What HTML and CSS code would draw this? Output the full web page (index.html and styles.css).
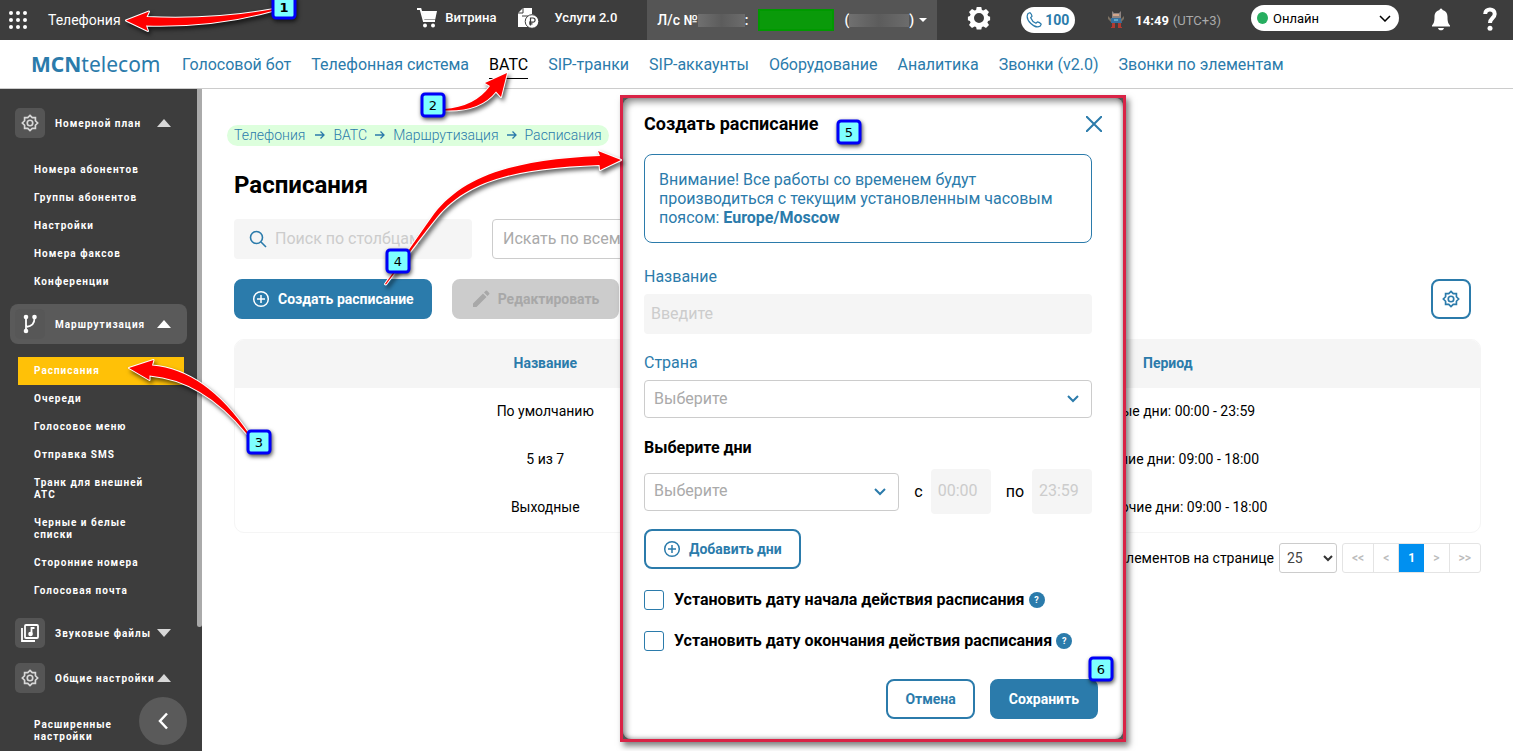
FILE: index.html
```html
<!DOCTYPE html>
<html lang="ru">
<head>
    <meta charset="UTF-8">
    <meta name="viewport" content="width=device-width, initial-scale=1.0">
    <title>MCNtelecom - Расписания</title>
    <link rel="stylesheet" href="styles.css">
</head>
<body>
    <!-- shared icons -->
    <svg class="sprite" aria-hidden="true">
        <symbol id="i-gear" viewBox="0 0 24 24">
            <path d="M12 2.8l2.7 2.7h3.8v3.8l2.7 2.7-2.7 2.7v3.8h-3.8L12 21.2l-2.7-2.7H5.500v-3.800L2.800 12l2.700-2.700V5.500h3.800z" fill="none" stroke="currentColor" stroke-width="2"/>
            <circle cx="12" cy="12" r="3.300" fill="none" stroke="currentColor" stroke-width="2"/>
        </symbol>
        <symbol id="i-plus" viewBox="0 0 18 18">
            <circle cx="9" cy="9" r="7.300" fill="none" stroke="currentColor" stroke-width="1.500"/>
            <path d="M9 5v8M5 9h8" stroke="currentColor" stroke-width="1.500"/>
        </symbol>
        <symbol id="i-arrow" viewBox="0 0 10 10">
            <path d="M0 5h9M5.500 1.500L9 5 5.500 8.500" fill="none" stroke="currentColor" stroke-width="1.300"/>
        </symbol>
    </svg>

    <header class="topbar">
        <button class="icon-btn apps" aria-label="Приложения">
            <svg width="18" height="18" viewBox="0 0 18 18" fill="#fff">
                <circle cx="2" cy="2" r="2"/><circle cx="9" cy="2" r="2"/><circle cx="16" cy="2" r="2"/>
                <circle cx="2" cy="9" r="2"/><circle cx="9" cy="9" r="2"/><circle cx="16" cy="9" r="2"/>
                <circle cx="2" cy="16" r="2"/><circle cx="9" cy="16" r="2"/><circle cx="16" cy="16" r="2"/>
            </svg>
        </button>
        <a href="#" class="section-name">Телефония</a>
        <div class="topbar-right">
            <a href="#" class="top-link">
                <svg width="22" height="22" viewBox="0 0 22 22" fill="#fff">
                    <path d="M1 2h3.500l3.300 12H19" fill="none" stroke="#fff" stroke-width="1.800"/>
                    <path d="M5.500 4H21l-1.800 8.500H7.800z"/>
                    <circle cx="9" cy="18.500" r="2"/><circle cx="17" cy="18.500" r="2"/>
                </svg>
                <span>Витрина</span>
            </a>
            <a href="#" class="top-link services">
                <svg width="22" height="22" viewBox="0 0 22 22" fill="#fff">
                    <path d="M6 1h9v6l2 1v12H1V6z"/>
                    <path d="M1 6h5V1M5 9h6" fill="none" stroke="#3d3d3d"/>
                    <circle cx="15" cy="14.500" r="6.800" stroke="#3d3d3d"/>
                    <path d="M13.500 18.500v-7.500h2.500a2 2 0 0 1 0 4.200h-4M12 16.800h3.500" fill="none" stroke="#3d3d3d" stroke-width="1.200"/>
                </svg>
                <span>Услуги 2.0</span>
            </a>
            <button class="account">
                <span>Л/с №</span><span class="masked number"></span><span>:</span>
                <span class="masked balance"></span>
                <span>(</span><span class="masked credit"></span><span>)</span>
                <span class="caret"></span>
            </button>
            <button class="icon-btn settings" aria-label="Настройки">
                <svg width="24" height="24" viewBox="0 0 24 24" fill="#fff" fill-rule="evenodd">
                    <path d="M9.700 1h4.600l.6 2.900 1.500.7 2.600-1.600 3 3-1.600 2.600.7 1.500 2 .6v3.600l-2 .6-.7 1.500L22 19l-3 3-2.600-1.600-1.500.7-.6 2.400H9.700l-.6-2.400-1.500-.7L5 22l-3-3 1.600-2.600-.7-1.500-2-.6v-3.600l2-.6.7-1.500L2 6l3-3 2.600 1.600 1.500-.7zM12 7a5 5 0 1 0 0 10 5 5 0 0 0 0-10z"/>
                </svg>
            </button>
            <a href="#" class="phone-pill">
                <svg width="16" height="16" viewBox="0 0 16 16" fill="none" stroke="#2b7bab" stroke-width="1.200">
                    <path d="M2 1.500l2-.8c1 .8 1.800 2.200 2 3.500L4.700 5.700c.8 2.200 2.900 4.500 5.200 5.500l1.600-1.400c1.500.3 2.800 1.200 3.700 2.300l-.9 2C9 17.500-1.500 8 2 1.500z"/>
                </svg>
                <span>100</span>
            </a>
            <span class="clock">
                <svg width="18" height="20" viewBox="0 0 18 20">
                    <path d="M5 1l2 2h5l2-2v7H5z" fill="#8d8380"/>
                    <path d="M6 4h6v2H6z" fill="#d2a58a"/>
                    <path d="M4 8h10l1 5H4z" fill="#356f9d"/>
                    <path d="M1 6l3 3v3L1 9zM17 6l-3 3v3l3-3z" fill="#7b7062"/>
                    <path d="M7 9h4v2H7z" fill="#5fa7c8"/>
                    <path d="M5 13h3v5H4v-1h1zM11 13h3v4h1v1h-4z" fill="#b03a30"/>
                </svg>
                <b>14:49</b> <span>(UTC+3)</span>
            </span>
            <div class="status">
                <span class="dot"></span>
                <select aria-label="Статус">
                    <option>Онлайн</option>
                </select>
            </div>
            <button class="icon-btn bell" aria-label="Уведомления">
                <svg width="20" height="24" viewBox="0 0 20 24" fill="#fff">
                    <path d="M8.500 2a1.500 1.500 0 0 1 3 0c3.500.8 5 3.500 5 7 0 5 .8 6.500 2.500 8.500v1H1v-1C2.700 15.500 3.500 14 3.500 9c0-3.500 1.500-6.200 5-7zM7 20h6c-.3 1.500-1.500 2.300-3 2.300S7.300 21.500 7 20z"/>
                </svg>
            </button>
            <button class="icon-btn help" aria-label="Помощь">
                <svg width="14" height="26" viewBox="0 0 14 26">
                    <path d="M2.200 7C2 1 12 1 11.700 7c0 4-4.700 4-4.700 9" fill="none" stroke="#fff" stroke-width="4"/>
                    <circle cx="7" cy="21.200" r="2.500" fill="#fff"/>
                </svg>
            </button>
        </div>
    </header>

    <nav class="mainnav">
        <a href="#" class="logo"><b>MCN</b>telecom</a>
        <a href="#">Голосовой бот</a>
        <a href="#">Телефонная система</a>
        <a href="#" class="active">ВАТС</a>
        <a href="#">SIP-транки</a>
        <a href="#">SIP-аккаунты</a>
        <a href="#">Оборудование</a>
        <a href="#">Аналитика</a>
        <a href="#">Звонки (v2.0)</a>
        <a href="#">Звонки по элементам</a>
    </nav>

    <div class="layout">
        <aside class="sidebar">
            <button class="group">
                <span class="group-icon"><svg width="20" height="20"><use href="#i-gear"/></svg></span>
                <span class="group-name">Номерной план</span>
                <span class="tri up"></span>
            </button>
            <div class="submenu">
                <a href="#">Номера абонентов</a>
                <a href="#">Группы абонентов</a>
                <a href="#">Настройки</a>
                <a href="#">Номера факсов</a>
                <a href="#">Конференции</a>
            </div>
            <button class="group open">
                <span class="group-icon">
                    <svg width="16" height="20" viewBox="0 0 16 20" fill="none" stroke="#fff" stroke-width="1.800">
                        <path d="M4 3v14M4 13c6-1 8.500-3 8.500-9"/>
                        <g fill="#fff" stroke="none"><circle cx="4" cy="3" r="2.300"/><circle cx="12.500" cy="3" r="2.300"/><circle cx="4" cy="17" r="2.300"/></g>
                    </svg>
                </span>
                <span class="group-name">Маршрутизация</span>
                <span class="tri up"></span>
            </button>
            <div class="submenu">
                <a href="#" class="current">Расписания</a>
                <a href="#">Очереди</a>
                <a href="#">Голосовое меню</a>
                <a href="#">Отправка SMS</a>
                <a href="#">Транк для внешней АТС</a>
                <a href="#">Черные и белые списки</a>
                <a href="#">Сторонние номера</a>
                <a href="#">Голосовая почта</a>
            </div>
            <button class="group">
                <span class="group-icon">
                    <svg width="20" height="20" viewBox="0 0 20 20" fill="none" stroke="#fff" stroke-width="1.800">
                        <rect x="5" y="2" width="13" height="13" rx="1"/>
                        <path d="M2 5v13h13"/>
                        <path d="M11.500 11.500V5h3" />
                        <circle cx="10.500" cy="11" r="1.400" fill="#fff"/>
                    </svg>
                </span>
                <span class="group-name">Звуковые файлы</span>
                <span class="tri down"></span>
            </button>
            <button class="group">
                <span class="group-icon"><svg width="20" height="20"><use href="#i-gear"/></svg></span>
                <span class="group-name">Общие настройки</span>
                <span class="tri up"></span>
            </button>
            <div class="submenu">
                <a href="#">Расширенные настройки</a>
            </div>
            <span class="scroll-thumb"></span>
            <button class="collapse" aria-label="Свернуть меню">
                <svg width="12" height="18" viewBox="0 0 12 18" fill="none" stroke="#fff" stroke-width="2.500"><path d="M10 1.500L3 9l7 7.500"/></svg>
            </button>
        </aside>

        <main class="content">
            <div class="breadcrumbs">
                <a href="#">Телефония</a>
                <svg width="10" height="10"><use href="#i-arrow"/></svg>
                <a href="#">ВАТС</a>
                <svg width="10" height="10"><use href="#i-arrow"/></svg>
                <a href="#">Маршрутизация</a>
                <svg width="10" height="10"><use href="#i-arrow"/></svg>
                <a href="#">Расписания</a>
            </div>
            <h1>Расписания</h1>
            <div class="filters">
                <label class="search">
                    <svg width="18" height="18" viewBox="0 0 18 18" fill="none" stroke="#2b7bab" stroke-width="1.600"><circle cx="7.500" cy="7.500" r="6"/><path d="M12 12l5 5"/></svg>
                    <input type="text" placeholder="Поиск по столбцам" aria-label="Поиск по столбцам">
                </label>
                <select class="columns" aria-label="Столбцы">
                    <option>Искать по всем</option>
                </select>
            </div>
            <div class="toolbar">
                <button class="btn primary"><svg width="18" height="18"><use href="#i-plus"/></svg>Создать расписание</button>
                <button class="btn disabled" disabled>
                    <svg width="18" height="18" viewBox="0 0 18 18" fill="#a8a8a8"><path d="M1 13.500L11 3.500 14.500 7l-10 10H1zM12 2.500L13.700.8a1 1 0 0 1 1.400 0l2.100 2.100a1 1 0 0 1 0 1.400L15.500 6z"/></svg>Редактировать
                </button>
                <button class="btn square" aria-label="Настройка таблицы"><svg width="20" height="20"><use href="#i-gear"/></svg></button>
            </div>
            <div class="table-box">
                <table>
                    <thead>
                        <tr><th>Название</th><th>Период</th></tr>
                    </thead>
                    <tbody>
                        <tr><td>По умолчанию</td><td class="period">Любые дни: 00:00 - 23:59</td></tr>
                        <tr><td>5 из 7</td><td class="period">Рабочие дни: 09:00 - 18:00</td></tr>
                        <tr><td>Выходные</td><td class="period">Нерабочие дни: 09:00 - 18:00</td></tr>
                    </tbody>
                </table>
            </div>
            <div class="paging">
                <label for="pageSize">Количество элементов на странице</label>
                <select id="pageSize">
                    <option>25</option>
                </select>
                <div class="pages">
                    <button>&lt;&lt;</button><button>&lt;</button><button class="on">1</button><button>&gt;</button><button>&gt;&gt;</button>
                </div>
            </div>
        </main>
    </div>

    <div class="dialog-frame">
        <form class="dialog" role="dialog" aria-labelledby="dialogTitle">
            <div class="dialog-head">
                <h2 id="dialogTitle">Создать расписание</h2>
                <button type="button" class="close" aria-label="Закрыть">
                    <svg width="16" height="16" viewBox="0 0 16 16" stroke="#2b7bab" stroke-width="2"><path d="M0 0l16 16M16 0L0 16"/></svg>
                </button>
            </div>
            <div class="dialog-body">
                <p class="notice">Внимание! Все работы со временем будут производиться с текущим установленным часовым поясом: <b>Europe/Moscow</b></p>
                <label class="field-label" for="name">Название</label>
                <input type="text" id="name" class="text-input" placeholder="Введите">
                <label class="field-label" for="country">Страна</label>
                <select id="country" class="select">
                    <option>Выберите</option>
                </select>
                <label class="days-label" for="days">Выберите дни</label>
                <div class="days-row">
                    <select id="days" class="select">
                        <option>Выберите</option>
                    </select>
                    <label for="from">с</label>
                    <input type="text" id="from" class="time" placeholder="00:00">
                    <label for="to">по</label>
                    <input type="text" id="to" class="time" placeholder="23:59">
                </div>
                <button type="button" class="btn outline"><svg width="18" height="18"><use href="#i-plus"/></svg>Добавить дни</button>
                <div class="check-row">
                    <input type="checkbox" id="startDate">
                    <label for="startDate">Установить дату начала действия расписания</label>
                    <span class="hint">?</span>
                </div>
                <div class="check-row">
                    <input type="checkbox" id="endDate">
                    <label for="endDate">Установить дату окончания действия расписания</label>
                    <span class="hint">?</span>
                </div>
            </div>
            <div class="dialog-foot">
                <button type="button" class="btn outline">Отмена</button>
                <button type="submit" class="btn primary">Сохранить</button>
            </div>
        </form>
    </div>

    <!-- numbered steps and pointers -->
    <svg class="steps" width="1513" height="751" viewBox="0 0 1513 751">
        <g class="pointers">
            <path d="M126 20.500L149 11.500 146.500 17Q215 20 274 9L274 10.500Q215 27.500 146 25.500L148 31Z"/>
            <path d="M507 73L485 83 490 86Q475 107 444 109L444 110.500Q480 112 496 91.500L501 97Z"/>
            <path d="M129 368L153.500 360 152 365.500Q206 370 249 434L247 434Q203 380 149.500 375.500L149.500 380Z"/>
            <path d="M621 160L598 151 600 156C510 160 463 177 434 214C418 236 404 258 385 284L386 284.500C405 259 420 238 437 217C467 181 515 168 599.500 165L600 170Z"/>
        </g>
        <g class="badges">
            <rect x="273" y="-4" width="22" height="22" rx="3"/><text x="284" y="12" font-weight="bold">1</text>
            <rect x="422" y="94" width="22" height="22" rx="3"/><text x="433" y="110">2</text>
            <rect x="248" y="431" width="22" height="22" rx="3"/><text x="259" y="447">3</text>
            <rect x="387" y="250" width="22" height="22" rx="3"/><text x="398" y="266">4</text>
            <rect x="838" y="121" width="22" height="22" rx="3"/><text x="849" y="137">5</text>
            <rect x="1090" y="658" width="22" height="22" rx="3"/><text x="1101" y="674">6</text>
        </g>
    </svg>
</body>
</html>
```
FILE: styles.css
```css
* {
    box-sizing: border-box;
}
body {
    margin: 0;
    height: 100vh;
    display: flex;
    flex-direction: column;
    overflow: hidden;
    position: relative;
    font-family: Roboto, "Liberation Sans", sans-serif;
    font-size: 14px;
    color: #000;
    background: #fff;
}
a {
    color: #2b7bab;
    text-decoration: none;
}
button, input, select {
    font-family: inherit;
    font-size: inherit;
    margin: 0;
}
button {
    cursor: pointer;
}
svg {
    flex: none;
}
.sprite {
    display: none;
}

/* top bar */
.topbar {
    display: flex;
    align-items: center;
    flex: none;
    height: 40px;
    padding: 0 16px 0 9px;
    background: #3d3d3d;
    color: #fff;
}
.icon-btn {
    display: flex;
    padding: 0;
    border: none;
    background: none;
}
.section-name {
    margin-left: 21px;
    color: #fff;
}
.topbar-right {
    display: flex;
    align-items: center;
    margin-left: auto;
}
.top-link {
    display: flex;
    align-items: center;
    gap: 7px;
    height: 35px;
    align-self: flex-start;
    color: #fff;
    font-size: 13px;
    font-weight: 500;
}
.services {
    margin-left: 21px;
    gap: 15px;
}
.account {
    display: flex;
    align-items: center;
    height: 40px;
    margin-left: 30px;
    padding: 0 10px;
    border: none;
    background: #555;
    color: #fff;
    font-weight: 500;
}
.masked {
    height: 13px;
    background: linear-gradient(90deg, #707070, #5c5c5c, #6c6c6c);
}
.number {
    width: 47px;
}
.balance {
    width: 76px;
    height: 22px;
    margin: 0 10px;
    background: #0a9a0a;
    border: 2px solid #090;
}
.credit {
    width: 60px;
}
.caret {
    margin-left: 5px;
    border: 4px solid transparent;
    border-top-color: #fff;
    border-bottom: none;
}
.settings {
    margin-left: 30px;
    padding-bottom: 4px;
}
.phone-pill {
    display: flex;
    align-items: center;
    gap: 3px;
    height: 26px;
    margin-left: 30px;
    padding: 0 6px 0 5px;
    border-radius: 13px;
    background: #fff;
    font-weight: 700;
}
.clock {
    display: flex;
    align-items: center;
    margin-left: 32px;
    font-size: 13px;
}
.clock b {
    margin: 0 4px 0 10px;
}
.clock span {
    color: #aaa;
}
.status {
    position: relative;
    height: 35px;
    padding-top: 5px;
    align-self: flex-start;
    margin-left: 30px;
}
.status select {
    width: 148px;
    height: 26px;
    padding: 0 22px;
    border: none;
    border-radius: 13px;
    appearance: none;
    font-size: 13px;
    color: #000;
    background: #fff url("data:image/svg+xml,%3Csvg xmlns='http://www.w3.org/2000/svg' width='12' height='7' fill='none' stroke='black' stroke-width='1.5'%3E%3Cpath d='M1 1l5 5 5-5'/%3E%3C/svg%3E") no-repeat right 8px center;
}
.dot {
    position: absolute;
    left: 6px;
    top: 12px;
    width: 11px;
    height: 12px;
    border-radius: 50%;
    background: #27ae60;
}
.bell {
    margin-left: 32px;
}
.help {
    margin-left: 32px;
}

/* main navigation */
.mainnav {
    display: flex;
    align-items: center;
    flex: none;
    gap: 20px;
    height: 49px;
    padding-left: 31px;
    border-bottom: 1px solid #ccc;
    font-size: 16px;
}
.mainnav .active {
    color: #000;
    padding: 5px 0 4px;
    border-bottom: 1px solid #000;
}
.logo {
    width: 131px;
    font-family: "Noto Sans", "Open Sans", sans-serif;
    font-size: 21px;
    line-height: 28px;
}

/* sidebar */
.layout {
    display: flex;
    flex: 1;
    min-height: 0;
}
.sidebar {
    position: relative;
    flex: none;
    width: 202px;
    padding: 14px 15px 0 10px;
    overflow: hidden;
    background: #3d3d3d;
}
.group {
    display: flex;
    align-items: center;
    width: 100%;
    height: 40px;
    margin-bottom: 5px;
    padding: 0 15px 0 5px;
    border: none;
    border-radius: 8px;
    background: none;
    color: #fff;
    font-size: 10px;
    font-weight: 700;
    letter-spacing: 1px;
    text-align: left;
}
.group.open {
    background: #5a5a5a;
    color: #fff;
}
.group-icon {
    display: flex;
    align-items: center;
    justify-content: center;
    width: 30px;
    height: 30px;
    border-radius: 5px;
    background: #555;
    color: #d8d8d8;
}
.group.open .group-icon {
    background: #575757;
}
.group-name {
    width: 102px;
    margin-left: 10px;
    white-space: nowrap;
}
.tri {
    border: 7px solid transparent;
}
.tri.up {
    border-top: none;
    border-bottom: 8px solid #d8d8d8;
}
.tri.down {
    border-bottom: none;
    border-top: 8px solid #d8d8d8;
}
.group.open .tri {
    border-bottom-color: #fff;
}
.submenu {
    padding: 13px 3px 3px 8px;
}
.group + .submenu {
    margin-top: -5px;
    margin-bottom: 5px;
}
.submenu a {
    display: block;
    padding: 8px 30px 8px 16px;
    color: #fff;
    font-size: 10px;
    font-weight: 700;
    line-height: 12px;
    letter-spacing: 1px;
}
.submenu .current {
    background: #ffc107;
}
.scroll-thumb {
    position: absolute;
    top: 0;
    right: 0;
    width: 5px;
    height: 538px;
    border-radius: 0 0 3px 3px;
    background: #aaa;
}
.collapse {
    position: absolute;
    right: 15px;
    bottom: 6px;
    display: flex;
    align-items: center;
    justify-content: center;
    width: 48px;
    height: 48px;
    padding: 0;
    border: none;
    border-radius: 50%;
    background: #5a5a5a;
}

/* content */
.content {
    flex: 1;
    min-width: 0;
    padding: 36px 32px 0;
}
.breadcrumbs {
    display: flex;
    align-items: center;
    gap: 8px;
    width: fit-content;
    height: 21px;
    margin-left: -7px;
    padding: 0 7px 2px;
    border-radius: 11px;
    background: #dfd;
    color: #2b7bab;
    font-weight: 300;
}
.breadcrumbs a:first-child {
    margin-right: 2px;
}
h1 {
    margin: 25px 0 20px;
    font-size: 24px;
    line-height: 28px;
    font-weight: 700;
}
.filters {
    display: flex;
    gap: 20px;
}
.search {
    display: flex;
    align-items: center;
    gap: 8px;
    width: 238px;
    height: 40px;
    padding: 0 15px;
    border-radius: 4px;
    background: #f5f5f5;
}
.search input {
    flex: 1;
    min-width: 0;
    padding: 0 0 2px;
    border: none;
    background: none;
    font-size: 16px;
}
.search input::placeholder {
    color: #ccc;
}
.columns {
    width: 238px;
    height: 40px;
    padding: 0 10px 2px;
    border: 1px solid #ccc;
    border-radius: 4px;
    appearance: none;
    background: #fff;
    color: #aaa;
    font-size: 16px;
}
.toolbar {
    display: flex;
    gap: 20px;
    margin: 20px 10px 20px 0;
}
.btn {
    display: flex;
    align-items: center;
    justify-content: center;
    gap: 8px;
    height: 40px;
    padding: 0 16px;
    border: 2px solid #2b7bab;
    border-radius: 8px;
    background: #fff;
    color: #2b7bab;
    font-size: 14px;
    font-weight: 700;
}
.btn.primary {
    background: #2b7bab;
    color: #fff;
}
.btn.disabled {
    padding: 0 18px;
    border-color: #ccc;
    background: #ccc;
    color: #a8a8a8;
}
.btn.square {
    width: 40px;
    margin-left: auto;
    padding: 0;
}
.table-box {
    border: 1px solid #f5f5f5;
    border-radius: 10px;
    overflow: hidden;
}
table {
    width: 100%;
    border-collapse: collapse;
    table-layout: fixed;
}
th, td {
    height: 48px;
    padding: 0 2px 2px 0;
    text-align: center;
}
td.period {
    padding-left: 12px;
}
th {
    background: #f5f5f5;
    color: #2b7bab;
    font-weight: 700;
}
.paging {
    display: flex;
    align-items: center;
    justify-content: flex-end;
    gap: 5px;
    margin-top: 10px;
}
.paging select {
    width: 58px;
    height: 30px;
    padding: 0 7px;
    border: 1px solid #ccc;
    border-radius: 3px;
    appearance: none;
    color: #444;
    background: #fff url("data:image/svg+xml,%3Csvg xmlns='http://www.w3.org/2000/svg' width='10' height='7' fill='none' stroke='%23333' stroke-width='2'%3E%3Cpath d='M1 1l4 4 4-4'/%3E%3C/svg%3E") no-repeat right 3px center;
}
.pages {
    display: flex;
    height: 30px;
    border: 1px solid #e4e4e4;
    border-radius: 3px;
}
.pages button {
    min-width: 25px;
    padding: 0 9px;
    border: none;
    border-right: 1px solid #e4e4e4;
    background: none;
    color: #bbb;
    font-size: 12px;
    font-weight: 500;
}
.pages button:last-child {
    border-right: none;
}
.pages .on {
    border: none;
    background: #0090f0;
    color: #fff;
    font-weight: 700;
}

/* create dialog */
.dialog-frame {
    position: absolute;
    left: 620px;
    top: 95px;
    width: 506px;
    border: 3px solid #d92346;
    background: #555;
    box-shadow: 3px 4px 6px rgba(0, 0, 0, 0.5);
}
.dialog {
    padding: 15px 21px 20px;
    border-radius: 8px;
    background: #fff;
    box-shadow: inset 3px 4px 6px rgba(0, 0, 0, 0.4), inset -1px -1px 4px rgba(0, 0, 0, 0.3);
}
.dialog-head {
    display: flex;
    align-items: center;
    justify-content: space-between;
    height: 22px;
}
h2 {
    margin: 0;
    font-size: 18px;
    line-height: 22px;
    font-weight: 700;
}
.close {
    display: flex;
    padding: 0;
    border: none;
    background: none;
}
.dialog-body {
    padding: 19px 10px 0 0;
    font-size: 16px;
}
.notice {
    margin: 0 0 24px;
    padding: 15px 14px;
    border: 1px solid #2b7bab;
    border-radius: 8px;
    color: #2b7bab;
    line-height: 19px;
}
.field-label {
    display: block;
    color: #2b7bab;
    line-height: 19px;
}
.text-input,
.time {
    display: block;
    border: none;
    border-radius: 4px;
    background: #f5f5f5;
    padding: 0 7px 2px;
}
.text-input {
    width: 100%;
    height: 40px;
    margin: 8px 0 19px;
}
.text-input::placeholder,
.time::placeholder {
    color: #ccc;
}
.select {
    display: block;
    width: 100%;
    height: 38px;
    padding: 0 9px 2px;
    border: 1px solid #ccc;
    border-radius: 4px;
    appearance: none;
    color: #aaa;
    background: #fff url("data:image/svg+xml,%3Csvg xmlns='http://www.w3.org/2000/svg' width='14' height='8' fill='none' stroke='%232b7bab' stroke-width='2'%3E%3Cpath d='M2 1l5 5 5-5'/%3E%3C/svg%3E") no-repeat right 11px center;
}
#country {
    margin: 8px 0 20px;
}
.days-label {
    display: block;
    font-weight: 700;
    line-height: 19px;
}
.days-row {
    display: flex;
    align-items: center;
    margin: 12px 0 15px;
}
.days-row .select {
    flex: 1;
    min-width: 0;
}
.days-row label {
    margin: 0 8px 0 15px;
}
.time {
    width: 60px;
    height: 45px;
}
.dialog-body .btn {
    padding: 0 17px;
}
.check-row {
    display: flex;
    align-items: center;
    gap: 4px;
    margin-top: 20px;
    height: 21px;
    font-weight: 700;
}
.check-row input {
    appearance: none;
    width: 20px;
    height: 20px;
    margin-right: 6px;
    border: 1px solid #2b7bab;
    border-radius: 3px;
    background: #fff;
}
.check-row input:checked {
    background: #2b7bab;
}
.hint {
    width: 16px;
    height: 16px;
    border-radius: 50%;
    background: #2b7bab;
    color: #fff;
    font-size: 9px;
    line-height: 16px;
    text-align: center;
}
.dialog-foot {
    display: flex;
    justify-content: flex-end;
    gap: 15px;
    margin-top: 28px;
    padding-right: 4px;
}
.dialog-foot .btn {
    padding: 0 17px;
}

/* numbered steps */
.steps {
    position: absolute;
    left: 0;
    top: 0;
    pointer-events: none;
}
.pointers {
    fill: #f00;
    stroke: #fff;
    stroke-width: 2;
    stroke-linejoin: round;
    paint-order: stroke;
    filter: drop-shadow(2px 3px 2px rgba(0, 0, 0, 0.6));
}
.badges {
    font-family: "DejaVu Sans", sans-serif;
    font-size: 13px;
    text-anchor: middle;
}
.badges rect {
    fill: #7dffff;
    stroke: #0000f8;
    stroke-width: 3;
    filter: drop-shadow(1px 2px 2px rgba(0, 0, 0, 0.7));
}
```
